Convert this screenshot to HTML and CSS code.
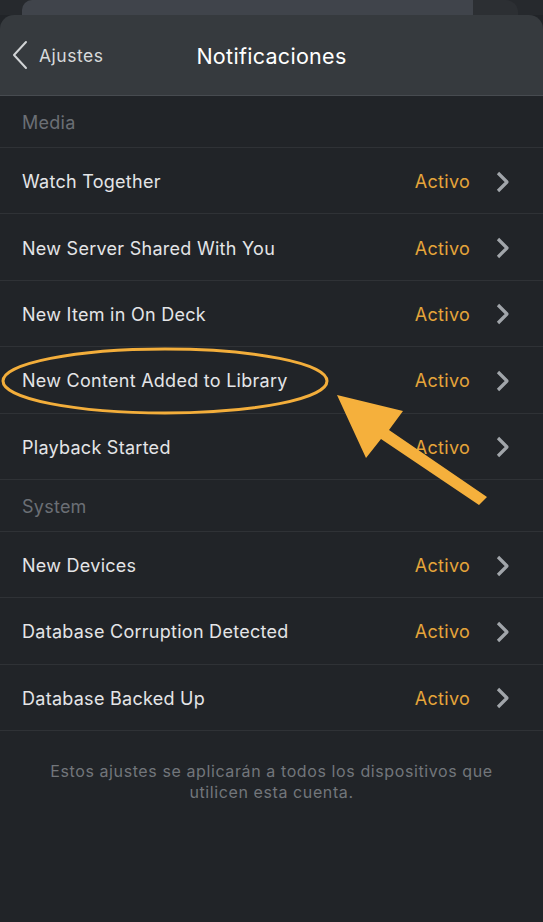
FILE: index.html
```html
<!DOCTYPE html>
<html lang="es">
<head>
<meta charset="utf-8">
<title>Notificaciones</title>
<link rel="stylesheet" href="styles.css">
</head>
<body>
<div class="page">
  <div class="stack">
    <div class="stack-card"></div>
    <div class="stack-side"></div>
  </div>
  <header class="sheet-head">
    <div class="back">
      <svg class="back-icon" width="16" height="30" viewBox="0 0 16 30"><polyline points="14,2 2,15 14,28" fill="none" stroke="#d2d4d6" stroke-width="2" stroke-linecap="round" stroke-linejoin="round"/></svg>
      <span>Ajustes</span>
    </div>
    <h1 class="title">Notificaciones</h1>
  </header>

  <div class="section-title">Media</div>
  <div class="row"><span class="label">Watch Together</span><span class="value">Activo</span><svg class="chev" width="14" height="22" viewBox="0 0 14 22"><polyline points="2,2 11,11 2,20" fill="none" stroke="#a1a5aa" stroke-width="3.2" stroke-linejoin="round"/></svg></div>
  <div class="row"><span class="label">New Server Shared With You</span><span class="value">Activo</span><svg class="chev" width="14" height="22" viewBox="0 0 14 22"><polyline points="2,2 11,11 2,20" fill="none" stroke="#a1a5aa" stroke-width="3.2" stroke-linejoin="round"/></svg></div>
  <div class="row"><span class="label">New Item in On Deck</span><span class="value">Activo</span><svg class="chev" width="14" height="22" viewBox="0 0 14 22"><polyline points="2,2 11,11 2,20" fill="none" stroke="#a1a5aa" stroke-width="3.2" stroke-linejoin="round"/></svg></div>
  <div class="row"><span class="label">New Content Added to Library</span><span class="value">Activo</span><svg class="chev" width="14" height="22" viewBox="0 0 14 22"><polyline points="2,2 11,11 2,20" fill="none" stroke="#a1a5aa" stroke-width="3.2" stroke-linejoin="round"/></svg></div>
  <div class="row"><span class="label">Playback Started</span><span class="value">Activo</span><svg class="chev" width="14" height="22" viewBox="0 0 14 22"><polyline points="2,2 11,11 2,20" fill="none" stroke="#a1a5aa" stroke-width="3.2" stroke-linejoin="round"/></svg></div>

  <div class="section-title">System</div>
  <div class="row row-s"><span class="label">New Devices</span><span class="value">Activo</span><svg class="chev" width="14" height="22" viewBox="0 0 14 22"><polyline points="2,2 11,11 2,20" fill="none" stroke="#a1a5aa" stroke-width="3.2" stroke-linejoin="round"/></svg></div>
  <div class="row row-s"><span class="label">Database Corruption Detected</span><span class="value">Activo</span><svg class="chev" width="14" height="22" viewBox="0 0 14 22"><polyline points="2,2 11,11 2,20" fill="none" stroke="#a1a5aa" stroke-width="3.2" stroke-linejoin="round"/></svg></div>
  <div class="row row-s"><span class="label">Database Backed Up</span><span class="value">Activo</span><svg class="chev" width="14" height="22" viewBox="0 0 14 22"><polyline points="2,2 11,11 2,20" fill="none" stroke="#a1a5aa" stroke-width="3.2" stroke-linejoin="round"/></svg></div>

  <p class="footer">Estos ajustes se aplicarán a todos los dispositivos que<br>utilicen esta cuenta.</p>

  <svg class="annot" width="543" height="922" viewBox="0 0 543 922">
    <ellipse cx="165" cy="381" rx="162" ry="32" fill="none" stroke="#f3ae3b" stroke-width="3"/>
    <polygon points="337,395 403,411 389,430 487,497 479,505 381,439 366,458" fill="#f5b03c"/>
  </svg>
</div>
</body>
</html>
```

FILE: styles.css
```css
* { box-sizing: border-box; }
html, body { margin: 0; padding: 0; }
body {
  background: #212428;
  font-family: Inter, "Noto Sans", "Liberation Sans", sans-serif;
  color: #e6e7e9;
}
.page {
  position: relative;
  width: 543px;
  height: 922px;
  overflow: hidden;
  background: #212428;
}
.stack {
  height: 15px;
  display: flex;
  background: #26292d;
}
.stack-card {
  margin-left: 22px;
  width: 451px;
  background: #40444b;
  border-radius: 10px 0 0 0;
}
.stack-side {
  width: 45px;
  background: #2c2f33;
  border-radius: 0 12px 0 0;
}
.sheet-head {
  position: relative;
  height: 81px;
  background: #363a3e;
  border-radius: 14px 14px 0 0;
  border-bottom: 1px solid #474b50;
  display: flex;
  align-items: center;
  justify-content: center;
}
.back {
  position: absolute;
  left: 12px;
  top: 25px;
  display: flex;
  align-items: center;
  gap: 11px;
  font-size: 17.5px;
  letter-spacing: 0.5px;
  color: #d8dadc;
}
.title {
  margin: 0;
  font-size: 21.5px;
  font-weight: 400;
  letter-spacing: 0.3px;
  color: #ffffff;
  padding-top: 2px;
}
.section-title {
  height: 52px;
  padding-left: 22px;
  padding-top: 2px;
  display: flex;
  align-items: center;
  font-size: 18px;
  letter-spacing: 0.25px;
  color: #6b6f75;
  border-bottom: 1px solid #2f3236;
}
.row {
  height: 66.4px;
  display: flex;
  align-items: center;
  padding-left: 22px;
  padding-right: 33px;
  padding-top: 2px;
  border-bottom: 1px solid #2f3236;
  font-size: 18px;
  letter-spacing: 0.27px;
}
.row-s { height: 66.33px; }
.label {
  flex: 1;
  color: #e4e5e7;
}
.value {
  color: #e5a43a;
}
.chev {
  margin-left: 26px;
  display: block;
}
.footer {
  margin: 0;
  padding-top: 30px;
  text-align: center;
  font-size: 16px;
  letter-spacing: 0.6px;
  line-height: 21px;
  color: #72767b;
}
.annot {
  position: absolute;
  left: 0;
  top: 0;
  pointer-events: none;
}
```
